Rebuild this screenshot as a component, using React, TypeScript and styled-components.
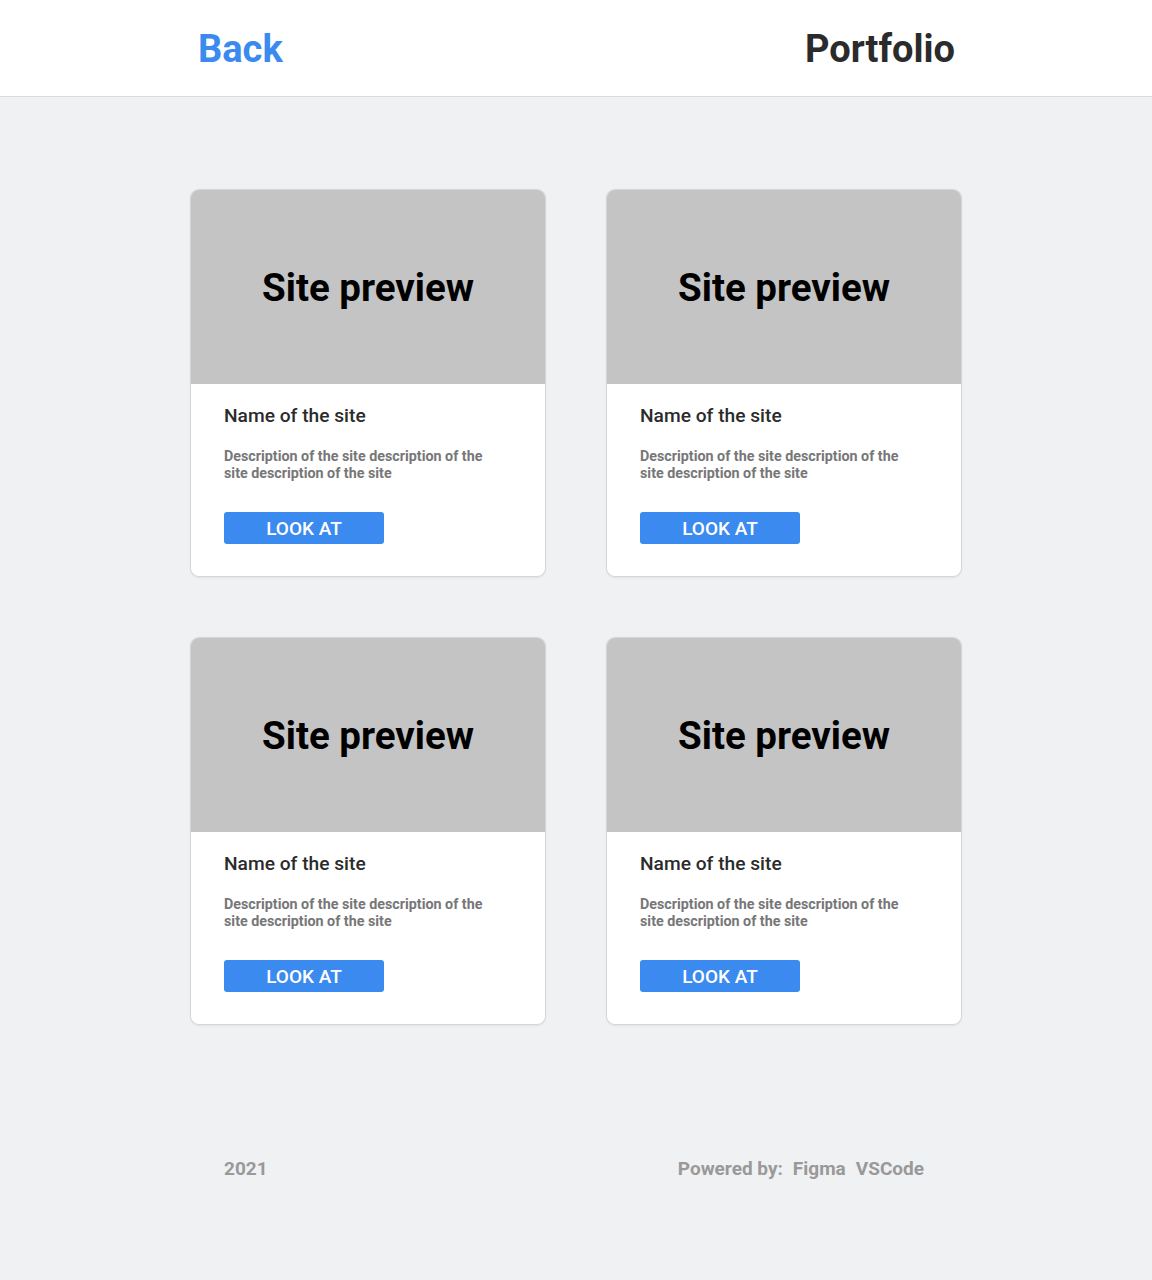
import React from 'react';
import styled, { createGlobalStyle } from 'styled-components';

const GlobalStyle = createGlobalStyle`
  body {
    margin: 0;
    background: #f0f1f3;
    font-family: Roboto, "Liberation Sans", sans-serif;
  }
`;

const Header = styled.header`
  height: 96px;
  background: #fff;
  border-bottom: 1px solid #dcdcdc;
`;

const HeaderInner = styled.div`
  width: 770px;
  margin: 0 auto;
  height: 100%;
  padding: 0 6px 0 7px;
  box-sizing: border-box;
  display: flex;
  align-items: center;
  justify-content: space-between;
`;

const HeaderLink = styled.a<{ $accent?: boolean }>`
  font-size: 38px;
  font-weight: 700;
  color: ${(p) => (p.$accent ? '#3b8af0' : '#2b2b2b')};
  text-decoration: none;
  cursor: pointer;
  margin-top: 2px;
`;

const Main = styled.main`
  width: 770px;
  margin: 93px auto 0;
  display: grid;
  grid-template-columns: repeat(2, 354px);
  column-gap: 62px;
  row-gap: 62px;
`;

const Card = styled.div`
  background: #fff;
  border-radius: 8px;
  overflow: hidden;
  box-shadow: 0 0 0 1px #d6d6d6, 0 1px 3px rgba(0, 0, 0, 0.12);
  height: 386px;
`;

const Preview = styled.div`
  height: 194px;
  background: #c4c4c4;
  display: flex;
  align-items: center;
  justify-content: center;
  font-size: 38.5px;
  font-weight: 700;
  color: #000;
`;

const Body = styled.div`
  padding: 21px 33px 0;
`;

const Name = styled.h3`
  margin: 0;
  font-size: 19.2px;
  font-weight: 500;
  color: #2b2b2b;
  line-height: 22px;
`;

const Description = styled.p`
  margin: 21px 0 0;
  width: 268px;
  font-size: 14.3px;
  font-weight: 700;
  line-height: 17px;
  color: #777;
`;

const LookButton = styled.button`
  margin-top: 30px;
  width: 160px;
  height: 32px;
  border: none;
  border-radius: 3px;
  background: #3b8af0;
  color: #fff;
  font-family: inherit;
  font-size: 19px;
  font-weight: 500;
  cursor: pointer;
`;

const Footer = styled.footer`
  width: 770px;
  margin: 133px auto 0;
  padding: 0 37px 100px 33px;
  box-sizing: border-box;
  display: flex;
  justify-content: space-between;
  font-size: 19px;
  font-weight: 700;
  color: #999;
`;

const Credits = styled.span`
  & > span {
    margin-left: 10px;
  }
`;

export default function App() {
  return (
    <>
      <GlobalStyle />
      <Header>
        <HeaderInner>
          <HeaderLink $accent>Back</HeaderLink>
          <HeaderLink>Portfolio</HeaderLink>
        </HeaderInner>
      </Header>
      <Main>
        {[0, 1, 2, 3].map((i) => (
          <Card key={i}>
            <Preview>Site preview</Preview>
            <Body>
              <Name>Name of the site</Name>
              <Description>
                Description of the site description of the site description of the site
              </Description>
              <LookButton>LOOK AT</LookButton>
            </Body>
          </Card>
        ))}
      </Main>
      <Footer>
        <span>2021</span>
        <Credits>
          Powered by:<span>Figma</span>
          <span>VSCode</span>
        </Credits>
      </Footer>
    </>
  );
}
